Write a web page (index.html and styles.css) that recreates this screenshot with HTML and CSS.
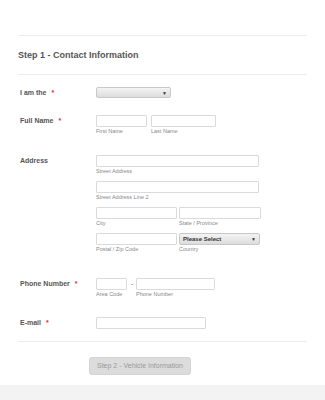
FILE: index.html
```html
<!DOCTYPE html>
<html lang="en">
<head>
    <meta charset="UTF-8">
    <meta name="viewport" content="width=device-width, initial-scale=1.0">
    <title>Step 1 - Contact Information</title>
    <link rel="stylesheet" href="styles.css">
</head>
<body>

    <div class="form">
        <div class="form-header">
            <h2>Step 1 - Contact Information</h2>
        </div>

        <div class="row row-role">
            <label class="row-label">I am the <span class="req">*</span></label>
            <div class="fields">
                <div class="select select-role"><span></span><span class="arrow">▼</span></div>
            </div>
        </div>

        <div class="row row-name">
            <label class="row-label">Full Name <span class="req">*</span></label>
            <div class="fields inline">
                <div class="field">
                    <div class="input w-first"></div>
                    <div class="sub">First Name</div>
                </div>
                <div class="field">
                    <div class="input w-last"></div>
                    <div class="sub">Last Name</div>
                </div>
            </div>
        </div>

        <div class="row row-address">
            <label class="row-label">Address</label>
            <div class="fields address">
                <div class="field span-2">
                    <div class="input w-street"></div>
                    <div class="sub">Street Address</div>
                </div>
                <div class="field span-2">
                    <div class="input w-street"></div>
                    <div class="sub">Street Address Line 2</div>
                </div>
                <div class="field">
                    <div class="input"></div>
                    <div class="sub">City</div>
                </div>
                <div class="field">
                    <div class="input"></div>
                    <div class="sub">State / Province</div>
                </div>
                <div class="field">
                    <div class="input"></div>
                    <div class="sub">Postal / Zip Code</div>
                </div>
                <div class="field">
                    <div class="select select-country"><span>Please Select</span><span class="arrow">▼</span></div>
                    <div class="sub">Country</div>
                </div>
            </div>
        </div>

        <div class="row row-phone">
            <label class="row-label">Phone Number <span class="req">*</span></label>
            <div class="fields inline">
                <div class="field">
                    <div class="input w-area"></div>
                    <div class="sub">Area Code</div>
                </div>
                <span class="dash">-</span>
                <div class="field">
                    <div class="input w-phone"></div>
                    <div class="sub">Phone Number</div>
                </div>
            </div>
        </div>

        <div class="row row-email">
            <label class="row-label">E-mail <span class="req">*</span></label>
            <div class="fields">
                <div class="input w-email"></div>
            </div>
        </div>

        <div class="form-footer">
            <button class="btn">Step 2 - Vehicle Information</button>
        </div>
    </div>

    <div class="page-bottom"></div>

</body>
</html>
```

FILE: styles.css
```css
* {
    margin: 0;
    padding: 0;
    box-sizing: border-box;
    font-family: 'Liberation Sans', Arial, sans-serif;
}

body {
    background: #fff;
    overflow: hidden;
}

.form {
    margin: 0 18px;
    padding-top: 35px;
}

.form-header {
    height: 40px;
    display: flex;
    align-items: center;
    border-top: 1px solid #ececec;
    border-bottom: 1px solid #ececec;
}

.form-header h2 {
    font-size: 9px;
    font-weight: bold;
    color: #555;
}

.row {
    display: grid;
    grid-template-columns: 76px auto;
    padding-left: 2px;
}

.row-role { margin-top: 12px; }
.row-name { margin-top: 16px; }
.row-address { margin-top: 20px; }
.row-phone { margin-top: 25px; }
.row-email { margin-top: 19px; }

.row-label {
    font-size: 7px;
    font-weight: bold;
    color: #555;
    line-height: 12px;
}

.req {
    color: #e03030;
    margin-left: 3px;
}

.fields.inline {
    display: flex;
    gap: 4px;
}

.fields.address {
    display: grid;
    grid-template-columns: 81px 82px;
    column-gap: 2px;
    row-gap: 6px;
}

.span-2 {
    grid-column: span 2;
}

.input {
    height: 12px;
    border: 1px solid #dadada;
    border-radius: 1px;
    background: #fff;
}

.w-first { width: 51px; }
.w-last { width: 65px; }
.w-street { width: 163px; }
.w-area { width: 31px; }
.w-phone { width: 79px; }
.w-email { width: 110px; }

.sub {
    font-size: 5.5px;
    line-height: 8px;
    color: #888;
}

.dash {
    width: 1px;
    font-size: 7px;
    line-height: 12px;
    color: #666;
}

.select {
    height: 11px;
    display: flex;
    align-items: center;
    justify-content: space-between;
    padding: 0 3px;
    border: 1px solid #c8c8c8;
    border-radius: 2px;
    background: linear-gradient(#f4f4f4, #dcdcdc);
    font-size: 6px;
    font-weight: bold;
    color: #333;
}

.select-role { width: 75px; }
.select-country { width: 81px; height: 12px; }

.arrow {
    font-size: 5px;
    color: #333;
}

.form-footer {
    margin-top: 12px;
    border-top: 1px solid #ececec;
    padding: 12px 0 10px 71px;
}

.btn {
    width: 102px;
    height: 18px;
    background: #dcdcdc;
    border: 1px solid #d4d4d4;
    border-radius: 3px;
    font-size: 7px;
    color: #999;
}

.page-bottom {
    height: 17px;
    background: #f3f3f3;
}
```
